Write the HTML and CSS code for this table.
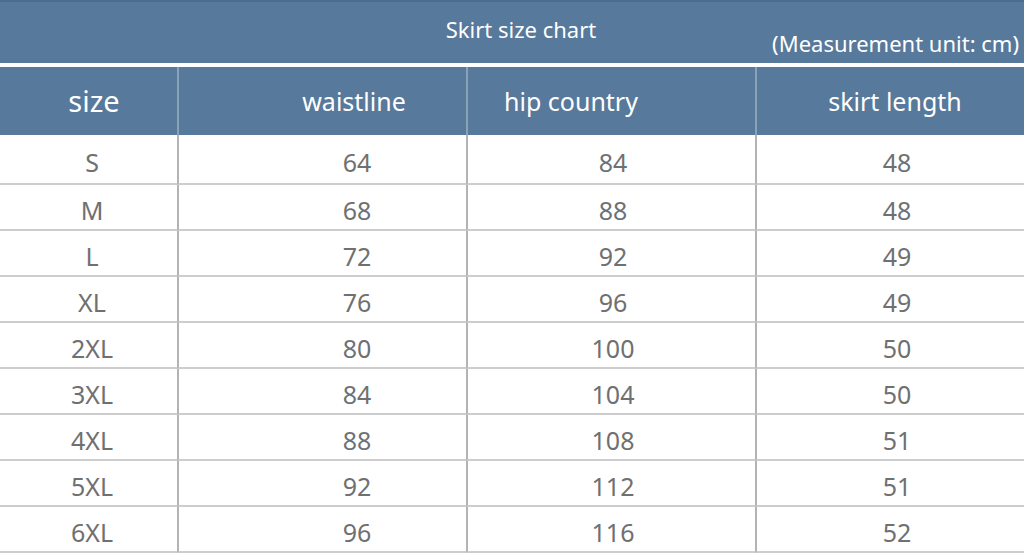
FILE: index.html
```html
<!DOCTYPE html>
<html lang="en">
<head>
<meta charset="utf-8">
<title>Skirt size chart</title>
<link rel="stylesheet" href="styles.css">
</head>
<body>
<div class="chart">
  <div class="titlebar">
    <div class="title">Skirt size chart</div>
    <div class="unit">(Measurement unit: cm)</div>
  </div>
  <div class="row head">
    <div class="cell c1 big">size</div>
    <div class="cell c2">waistline</div>
    <div class="cell c3">hip country</div>
    <div class="cell c4">skirt length</div>
  </div>
  <div class="row body first"><div class="cell c1">S</div><div class="cell c2">64</div><div class="cell c3">84</div><div class="cell c4">48</div></div>
  <div class="row body"><div class="cell c1">M</div><div class="cell c2">68</div><div class="cell c3">88</div><div class="cell c4">48</div></div>
  <div class="row body"><div class="cell c1">L</div><div class="cell c2">72</div><div class="cell c3">92</div><div class="cell c4">49</div></div>
  <div class="row body"><div class="cell c1">XL</div><div class="cell c2">76</div><div class="cell c3">96</div><div class="cell c4">49</div></div>
  <div class="row body"><div class="cell c1">2XL</div><div class="cell c2">80</div><div class="cell c3">100</div><div class="cell c4">50</div></div>
  <div class="row body"><div class="cell c1">3XL</div><div class="cell c2">84</div><div class="cell c3">104</div><div class="cell c4">50</div></div>
  <div class="row body"><div class="cell c1">4XL</div><div class="cell c2">88</div><div class="cell c3">108</div><div class="cell c4">51</div></div>
  <div class="row body"><div class="cell c1">5XL</div><div class="cell c2">92</div><div class="cell c3">112</div><div class="cell c4">51</div></div>
  <div class="row body"><div class="cell c1">6XL</div><div class="cell c2">96</div><div class="cell c3">116</div><div class="cell c4">52</div></div>
</div>
</body>
</html>
```

FILE: styles.css
```css
* { box-sizing: border-box; }
html, body { margin: 0; padding: 0; background: #ffffff; }
body {
  width: 1024px;
  height: 555px;
  overflow: hidden;
  font-family: "Noto Sans", "Open Sans", sans-serif;
}
.chart { display: flex; flex-direction: column; }
.titlebar {
  height: 63px;
  background: #57799b;
  border-top: 2px solid #4b6c8d;
  color: #ffffff;
  display: flex;
  flex-direction: column;
}
.title {
  font-size: 22px;
  line-height: 24px;
  padding-top: 15px;
  padding-left: 18px;
  text-align: center;
}
.unit {
  font-size: 22px;
  line-height: 24px;
  margin-top: -10px;
  text-align: right;
  padding-right: 5px;
}
.row {
  display: grid;
  grid-template-columns: 177px 289px 289px 269px;
}
.head {
  margin-top: 4px;
  height: 68px;
  background: #57799b;
  color: #ffffff;
}
.head .cell {
  font-size: 25px;
  line-height: 68px;
  text-align: center;
  white-space: nowrap;
}
.head .big { font-size: 29px; padding-left: 11px; }
.head .c2, .head .c3, .head .c4 { border-left: 2px solid #8aa1b8; }
.head .c2 { padding-left: 63px; }
.head .c3 { padding-right: 81px; }
.head .c4 { padding-left: 9px; }

.body {
  height: 46px;
  color: #707070;
}
.body.first { height: 50px; }
.body .cell {
  display: flex;
  align-items: center;
  justify-content: center;
  font-size: 25px;
  padding-top: 5px;
  border-bottom: 2px solid #cdcdcd;
}
.body .c2, .body .c3, .body .c4 { border-left: 2px solid #b3b3b3; }
.body .c1 { padding-left: 7px; }
.body .c2 { padding-left: 69px; }
.body .c3 { padding-left: 3px; }
.body .c4 { padding-left: 13px; }
```
